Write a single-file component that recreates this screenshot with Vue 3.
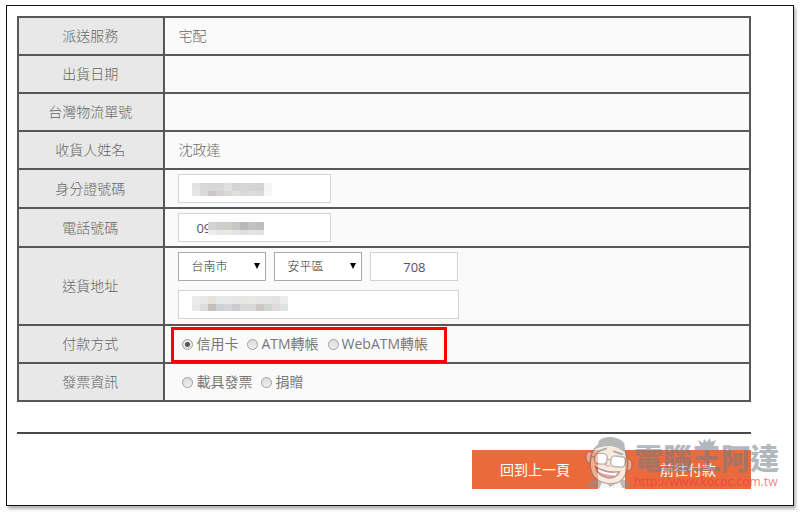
<script setup>
import { ref } from 'vue';

const payment = ref('credit');
const invoice = ref('');
const phone = ref('09');
const zip = ref('708');

const infoRows = [
  { label: '派送服務', value: '宅配' },
  { label: '出貨日期', value: '' },
  { label: '台灣物流單號', value: '' },
  { label: '收貨人姓名', value: '沈政達' }
];

const payments = [
  { value: 'credit', label: '信用卡' },
  { value: 'atm', label: 'ATM轉帳' },
  { value: 'webatm', label: 'WebATM轉帳' }
];

const invoices = [
  { value: 'carrier', label: '載具發票' },
  { value: 'donate', label: '捐贈' }
];

// 個資遮罩色塊,每格 8px
const masks = {
  id: [
    ['#e2e2e2', '#d9d7d8', '#d8d8d8', '#d8d8d8', '#e0e0e0', '#d6d2d6', '#d8d5d8', '#d5d5d5', '#d4d4d4', '#f4f6f6'],
    ['#e6e6e6', '#dadada', '#cac6ca', '#d4d3d4', '#d8d8d8', '#dededa', '#d8dad9', '#dcdcdc', '#dadada', '#f7f9f9']
  ],
  phone: [
    ['#d2d2d2', '#cdcfce', '#cfcdc8', '#c6c9c7', '#b6bab8', '#c2c2c2', '#bdbdbd'],
    ['#ececec', '#e6e6e6', '#e8e8e6', '#e2e4e3', '#dde0df', '#e3e3e3', '#e2e2e2']
  ],
  address: [
    ['#ebebeb', '#e7e7e7', '#e2e2d9', '#e6e8e8', '#e6e8e8', '#e6e6e6', '#e6e6e4', '#e8e9e1', '#e5e5e5', '#e4e6e6', '#e2e0e3', '#ececec'],
    ['#e8e8e8', '#dcdcdc', '#c6c0ba', '#cbd1d6', '#d2d6d6', '#cccccf', '#d8d8d8', '#d8d8d8', '#cbc8c4', '#d2d4d2', '#dcdadd', '#e0e2e2']
  ]
};

function maskCells(name) {
  return masks[name].flatMap((row, y) => row.map((fill, x) => ({ x: x * 8, y: y * 8, fill })));
}
</script>

<template>
  <main class="frame">
    <form @submit.prevent>
      <table class="order-table">
        <tbody>
          <tr v-for="row in infoRows" :key="row.label">
            <th scope="row">{{ row.label }}</th>
            <td>{{ row.value }}</td>
          </tr>
          <tr class="field-row">
            <th scope="row"><label for="id-number">身分證號碼</label></th>
            <td>
              <div class="field">
                <input id="id-number" type="text" class="text-input" />
                <svg class="mask mask-id" width="80" height="13" aria-hidden="true">
                  <rect v-for="(c, i) in maskCells('id')" :key="i" :x="c.x" :y="c.y" width="8" height="8" :fill="c.fill" />
                </svg>
              </div>
            </td>
          </tr>
          <tr class="field-row">
            <th scope="row"><label for="phone">電話號碼</label></th>
            <td>
              <div class="field">
                <input id="phone" v-model="phone" type="text" class="text-input" />
                <svg class="mask mask-phone" width="56" height="13" aria-hidden="true">
                  <rect v-for="(c, i) in maskCells('phone')" :key="i" :x="c.x" :y="c.y" width="8" height="8" :fill="c.fill" />
                </svg>
              </div>
            </td>
          </tr>
          <tr class="address-row">
            <th scope="row"><label for="address">送貨地址</label></th>
            <td>
              <div class="region">
                <div class="select-box">
                  <select aria-label="縣市"><option>台南市</option></select>
                  <svg class="caret" viewBox="0 0 6 6" aria-hidden="true"><path d="M0 0h6L3 6z" /></svg>
                </div>
                <div class="select-box">
                  <select aria-label="區域"><option>安平區</option></select>
                  <svg class="caret" viewBox="0 0 6 6" aria-hidden="true"><path d="M0 0h6L3 6z" /></svg>
                </div>
                <input v-model="zip" type="text" class="text-input zip" aria-label="郵遞區號" />
              </div>
              <div class="field field-wide">
                <input id="address" type="text" class="text-input" />
                <svg class="mask mask-address" width="96" height="15" aria-hidden="true">
                  <rect v-for="(c, i) in maskCells('address')" :key="i" :x="c.x" :y="c.y" width="8" height="8" :fill="c.fill" />
                </svg>
              </div>
            </td>
          </tr>
          <tr>
            <th scope="row">付款方式</th>
            <td>
              <div class="radios highlighted" role="radiogroup" aria-label="付款方式">
                <label v-for="item in payments" :key="item.value">
                  <input v-model="payment" type="radio" name="payment" :value="item.value" />
                  <span>{{ item.label }}</span>
                </label>
              </div>
            </td>
          </tr>
          <tr>
            <th scope="row">發票資訊</th>
            <td>
              <div class="radios" role="radiogroup" aria-label="發票資訊">
                <label v-for="item in invoices" :key="item.value">
                  <input v-model="invoice" type="radio" name="invoice" :value="item.value" />
                  <span>{{ item.label }}</span>
                </label>
              </div>
            </td>
          </tr>
        </tbody>
      </table>

      <hr class="divider" />

      <div class="actions">
        <button type="button" class="btn">回到上一頁</button>
        <button type="submit" class="btn">前往付款</button>

        <!-- 浮水印 -->
        <div class="watermark">
          <svg class="mascot" viewBox="0 0 52 56" aria-hidden="true">
            <path d="M3 55c1-6 5-8 9-9h28c5 1 7 4 8 9z" fill="#9a8a84" />
            <path d="M20 46l7 8 10-6 3 7H16z" fill="#ededed" />
            <ellipse cx="6" cy="23" rx="4" ry="6" fill="#f3d3bd" stroke="#8b7770" stroke-width="1.5" />
            <ellipse cx="46" cy="31" rx="4" ry="6" fill="#f3d3bd" stroke="#8b7770" stroke-width="1.5" />
            <path d="M13 12C22 6 38 7 43 17c4 10 3 23-4 30-8 6-22 4-29-4C4 34 6 18 13 12z" fill="#f7dcc8" stroke="#8b7770" stroke-width="1.5" />
            <path d="M13 14l3-9C23 0 37 1 42 9l1 10C36 11 24 9 13 14z" fill="#85898b" />
            <path d="M15 17l8-3M31 17l9 3" fill="none" stroke="#7c706c" stroke-width="2" stroke-linecap="round" />
            <rect x="11" y="19" width="13" height="11" rx="4" fill="#fff" stroke="#888" stroke-width="1.5" transform="rotate(5 17 24)" />
            <rect x="28" y="22" width="15" height="11" rx="4" fill="#fff" stroke="#888" stroke-width="1.5" transform="rotate(7 35 27)" />
            <path d="M24 25l4 1M7 22l4 1" stroke="#888" stroke-width="1.5" />
            <path d="M24 28c-3 3-1 5 3 4" fill="none" stroke="#a5806e" stroke-width="1.5" />
            <path d="M12 33c8 5 16 6 25 5-4 10-21 9-25-5z" fill="#d9625a" stroke="#80605a" stroke-width="1.5" />
            <path d="M14 35c7 4 14 5 21 4l-2 3c-7 0-13-1-18-4z" fill="#fff" />
          </svg>
          <div class="brand">
            <span class="brand-name">電腦<span class="king">王<svg class="crown" viewBox="0 0 18 9" aria-hidden="true"><path d="M0 2l5 3 1-4 3 3 3-4 1 4 5-2-3 7H3z" /></svg></span>阿達</span>
            <span class="brand-url">http://www.kocpc.com.tw</span>
          </div>
        </div>
      </div>
    </form>
  </main>
</template>

<style>
body {
  margin: 0;
  background: #fff;
}
</style>

<style scoped>
.frame {
  margin: 5px 6px 6px;
  padding: 10px 42px 16px 10px;
  border: 1px solid #111;
  background: #fff;
  box-shadow: 2px 3px 3px rgba(0, 0, 0, 0.3);
  font-family: 'Open Sans', 'Noto Sans CJK TC', sans-serif;
  font-size: 14px;
  line-height: 20px;
  color: #666;
}

.order-table {
  width: 100%;
  border-collapse: collapse;
  table-layout: fixed;
}

th,
td {
  box-sizing: border-box;
  height: 38px;
  padding: 0 13px;
  border: 2px solid #575757;
  font-weight: 300;
}

th {
  width: 20%;
  padding: 0 14px 0 12px;
  background: #e8e8e8;
  text-align: center;
}

td {
  background: #fafafa;
  text-align: left;
}

.field-row td {
  padding-top: 4px;
  padding-bottom: 4px;
}

.address-row td {
  padding-top: 4px;
  padding-bottom: 5px;
}

/* 輸入欄位 */
.field {
  position: relative;
  width: 153px;
  height: 29px;
}

.field-wide {
  width: 281px;
  margin-top: 9px;
}

.text-input,
select {
  box-sizing: border-box;
  width: 100%;
  height: 29px;
  padding: 0 17px;
  border: 1px solid #d3d3d3;
  border-radius: 0;
  background: #fff;
  font-family: inherit;
  font-size: 13px;
  color: #555;
}

.mask {
  position: absolute;
  top: 9px;
  left: 14px;
}

.mask-phone {
  left: 30px;
}

.mask-address {
  top: 6px;
}

.region {
  display: flex;
  gap: 8px;
}

.select-box {
  position: relative;
  width: 88px;
  height: 29px;
}

select {
  appearance: none;
  padding: 0 12px;
  border-color: #aaa;
  font-size: 12px;
  font-weight: 300;
  color: #333;
}

.caret {
  position: absolute;
  top: 11px;
  right: 6px;
  width: 6px;
  height: 6px;
  fill: #000;
  pointer-events: none;
}

.text-input.zip {
  width: 88px;
  text-align: center;
}

/* 單選項目 */
.radios {
  display: flex;
  gap: 9px;
  width: fit-content;
  padding-left: 4px;
  font-weight: 400;
  color: #777;
}

.radios label {
  display: flex;
  align-items: center;
  gap: 3px;
}

.radios input {
  appearance: none;
  box-sizing: border-box;
  width: 11px;
  height: 11px;
  margin: 0;
  border: 1px solid #a0a0a0;
  border-radius: 50%;
  background: linear-gradient(#dcdcdc, #f0f0f0);
}

.radios input:checked {
  background: radial-gradient(circle, #555 0 2px, #e6e6e6 3px);
}

.highlighted {
  position: relative;
}

.highlighted::after {
  content: '';
  position: absolute;
  inset: -7px -19px -9px -7px;
  border: 3px solid #f00;
  pointer-events: none;
}

.divider {
  height: 2px;
  margin: 30px 0 16px;
  border: 0;
  background: #484848;
}

.actions {
  position: relative;
  display: flex;
  justify-content: flex-end;
  gap: 27px;
}

.btn {
  width: 126px;
  height: 39px;
  padding: 0 0 2px;
  border: 0;
  background: #eb6a3c;
  font-family: inherit;
  font-size: 14px;
  color: #fff;
}

/* 浮水印 */
.watermark {
  position: absolute;
  top: -16px;
  right: -28px;
  display: flex;
  pointer-events: none;
}

.mascot {
  width: 50px;
  height: 56px;
  opacity: 0.6;
}

.brand {
  display: flex;
  flex-direction: column;
  padding-top: 9px;
}

.brand-name {
  font-size: 29px;
  font-weight: 900;
  line-height: 32px;
  color: rgba(112, 122, 134, 0.55);
}

.king {
  position: relative;
}

.crown {
  position: absolute;
  top: -1px;
  left: 5px;
  width: 20px;
  height: 9px;
  fill: #b0b8c0;
}

.brand-url {
  font-family: 'Noto Sans', sans-serif;
  font-size: 12px;
  line-height: 14px;
  color: rgba(240, 50, 70, 0.6);
}
</style>
